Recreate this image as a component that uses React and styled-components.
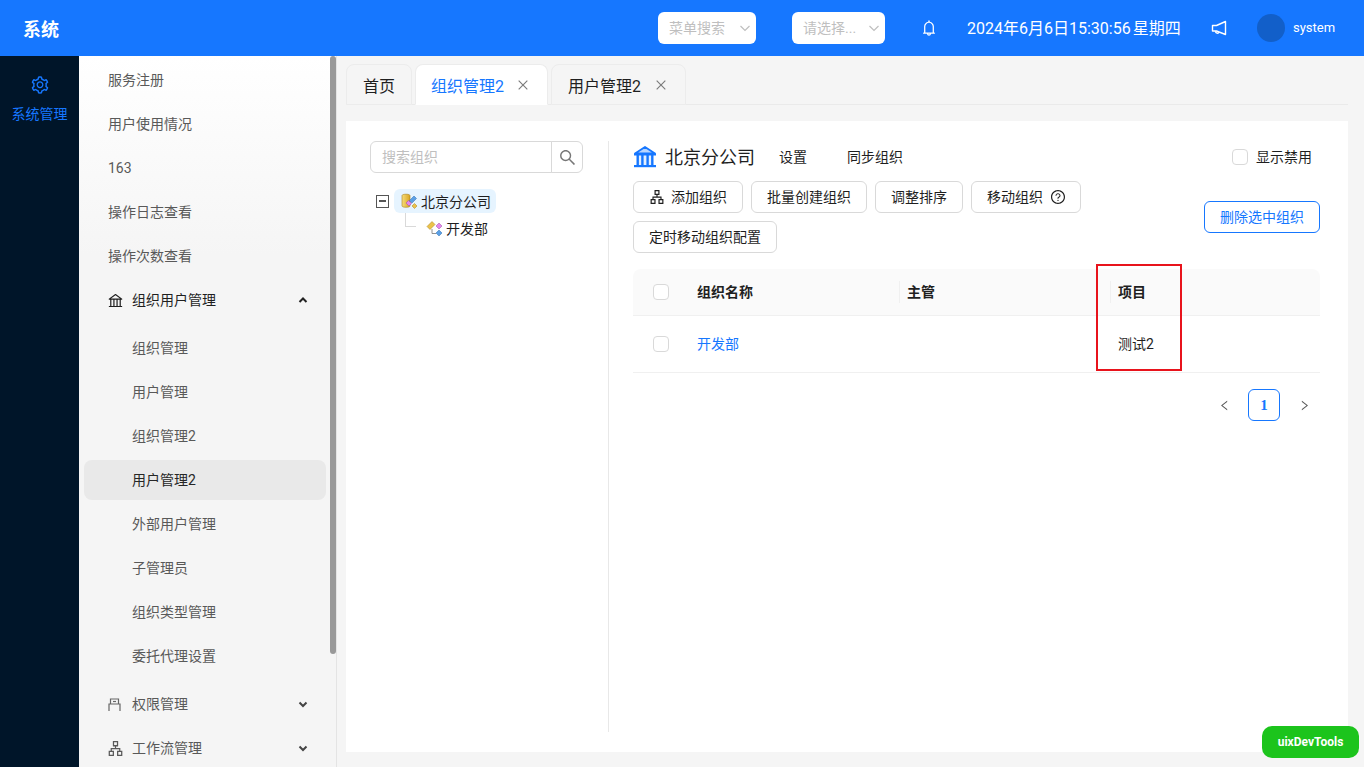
import React from 'react';
import styled, { createGlobalStyle } from 'styled-components';
import {
  AiOutlineSetting, AiOutlineBell, AiOutlineApartment, AiOutlineQuestionCircle,
  AiOutlineSearch, AiOutlineClose, AiOutlineLeft, AiOutlineRight, AiOutlineBank,
} from 'react-icons/ai';

const Global = createGlobalStyle`
  html, body { margin: 0; padding: 0; height: 100%; overflow: hidden; }
  * { box-sizing: border-box; }
  body { font-family: "Roboto", "Noto Sans CJK SC", sans-serif; font-size: 14px; color: #1f1f1f; background: #f5f5f5; }
`;

const Page = styled.div`display: flex; flex-direction: column; height: 767px; overflow: hidden;`;
const Label = styled.span`margin-bottom: 2px; white-space: nowrap;`;

const Header = styled.header`
  height: 56px; flex: none; background: #1677ff; color: #fff;
  display: flex; align-items: center; padding: 0 29px 0 24px;
  & > * { flex: none; }
`;
const Brand = styled.div`font-size: 18px; font-weight: 700; width: 634px; margin-left: -1px; margin-right: 1px;`;
const SelectBox = styled.div`
  width: ${p => p.$w}px; height: 32px; background: #fff; border-radius: 6px; margin-right: ${p => p.$mr}px;
  display: flex; align-items: center; justify-content: space-between; padding: 0 5px 0 11px;
  color: #bfbfbf; font-size: 14px; white-space: nowrap;
`;
const Chevron = styled.svg`width: 12px; height: 12px; flex: none; fill: none; stroke: ${p => p.$c || '#bfbfbf'}; stroke-width: ${p => p.$sw || 1.2};`;
const HeadIcon = styled.span`display: inline-flex; font-size: ${p => p.$s || 18}px; margin: 0 ${p => p.$mr}px 0 ${p => p.$ml}px;`;
const HornSvg = styled.svg`width: 16px; height: 16px; margin: 0 30px 0 30px; fill: none; stroke: #fff; stroke-width: 1.4;`;
const DateText = styled.span`font-size: 16px; white-space: nowrap; width: 214px; word-spacing: -2px; margin-bottom: 2px;`;
const Avatar = styled.span`width: 28px; height: 28px; border-radius: 50%; background: #125fc9; margin-right: 8px; flex: none;`;
const UserName = styled.span`font-size: 13px; margin-bottom: 2px;`;

const Body = styled.div`flex: 1; display: flex; min-height: 0;`;
const Rail = styled.nav`width: 79px; flex: none; background: #001529; color: #1677ff; display: flex; flex-direction: column; align-items: center; padding-top: 19px;`;
const RailIcon = styled.span`display: flex; font-size: 20px; margin-bottom: 9px;`;
const RailLabel = styled.span`font-size: 14px; line-height: 20px; white-space: nowrap;`;

const Side = styled.aside`
  position: relative; width: 258px; flex: none; overflow: hidden; border-right: 1px solid #e4e4e4;
  background: linear-gradient(180deg, #fff 0, #f5f5f5 200px);
  padding: 4px 10px 0 5px; display: flex; flex-direction: column; gap: 4px;
`;
const Scroll = styled.div`position: absolute; top: 0; right: 0; width: 6px; height: 598px; background: #999; border-radius: 3px;`;
const Item = styled.div`
  height: 40px; flex: none; display: flex; align-items: center; border-radius: 8px;
  padding-left: ${p => p.$sub ? 48 : 24}px; padding-right: 17px;
  color: ${p => p.$dark ? '#1f1f1f' : '#595959'};
  background: ${p => p.$sel ? '#e9e9e9' : 'transparent'};
  ${p => p.$sel && 'color:#262626;'}
`;
const ItemIcon = styled.span`display: inline-flex; font-size: 17px; width: 24px; margin-left: -1px; margin-right: 1px; flex: none;`;
const ItemLabel = styled.span`flex: 1; white-space: nowrap; margin-bottom: ${p => p.$flat ? 0 : 2}px;`;
const SubList = styled.div`display: flex; flex-direction: column; gap: 4px; padding: 4px 0; flex: none;`;

const Main = styled.main`flex: 1; min-width: 0; display: flex; flex-direction: column; padding: 8px 16px 15px 9px;`;
const TabBar = styled.div`display: flex; gap: 3px; height: 41px; flex: none; border-bottom: 1px solid #eaeaea; margin-bottom: 16px;`;
const Tab = styled.div`
  height: 41px; display: flex; align-items: center; font-size: 16px; padding: 0 ${p => p.$pr || 16}px 0 ${p => p.$pl || 16}px;
  border: 1px solid #ececec; border-radius: 8px 8px 0 0; white-space: nowrap;
  background: ${p => p.$on ? '#fff' : '#f5f5f5'}; color: ${p => p.$on ? '#1677ff' : '#1f1f1f'};
  ${p => p.$on && 'border-bottom-color:#fff;'}
`;
const TabClose = styled.span`display: inline-flex; color: #7a7a7a; font-size: 14px; margin-left: ${p => p.$ml}px;`;

const Card = styled.section`flex: 1; background: #fff; display: flex; padding: 20px 28px 20px 24px; min-height: 0;`;
const TreePanel = styled.div`width: 239px; flex: none; padding-right: 25px; border-right: 1px solid #e8e8e8;`;
const Search = styled.div`display: flex; height: 32px; margin-bottom: 16px;`;
const SearchInput = styled.div`flex: 1; border: 1px solid #d9d9d9; border-radius: 6px 0 0 6px; color: #bfbfbf; padding-left: 11px; display: flex; align-items: center;`;
const SearchBtn = styled.div`width: 32px; margin-left: -1px; border: 1px solid #d9d9d9; border-radius: 0 6px 6px 0; color: #777; font-size: 19px; display: flex; align-items: center; justify-content: center;`;
const TreeRow = styled.div`display: flex; align-items: center; height: 24px; margin-bottom: 3px; padding-left: ${p => p.$indent}px; position: relative;`;
const Expander = styled.span`width: 13px; height: 13px; border: 1.5px solid #555; margin-right: 5px; display: flex; align-items: center; justify-content: center; &::after { content: ''; width: 7px; height: 1.5px; background: #555; }`;
const NodePill = styled.span`height: 24px; display: inline-flex; align-items: center; gap: 3px; padding: 0 5px 0 7px; border-radius: 6px; background: ${p => p.$on ? '#e6f4ff' : 'transparent'}; white-space: nowrap;`;
const Connector = styled.span`position: absolute; left: 35px; top: -3px; width: 11px; height: 14px; border-left: 1px solid #d9d9d9; border-bottom: 1px solid #d9d9d9;`;
const NodeIcon = styled.svg`width: 17px; height: 17px; flex: none;`;

const Panel = styled.div`flex: 1; min-width: 0; margin-left: 24px; display: flex; flex-direction: column;`;
const TitleRow = styled.div`display: flex; align-items: center; height: 32px; margin-bottom: 8px;`;
const BankSvg = styled.svg`width: 24px; height: 24px; margin-right: 8px; flex: none;`;
const OrgName = styled.span`font-size: 18px; margin-right: 24px; margin-bottom: 2px; white-space: nowrap;`;
const TextLink = styled.span`margin-right: 40px; margin-bottom: 2px; white-space: nowrap;`;
const CheckWrap = styled.label`margin-left: auto; display: flex; align-items: center; gap: 8px; margin-right: 8px;`;
const Check = styled.span`width: 16px; height: 16px; border: 1px solid #d9d9d9; border-radius: 4px; background: #fff; flex: none; display: block;`;
const ActionRow = styled.div`display: flex; align-items: center; justify-content: space-between; margin-bottom: 16px;`;
const BtnWrap = styled.div`display: flex; flex-wrap: wrap; gap: 8px; width: 460px;`;
const Btn = styled.button`
  height: 32px; padding: 0 15px; border-radius: 6px; border: 1px solid ${p => p.$primary ? '#1677ff' : '#d9d9d9'};
  color: ${p => p.$primary ? '#1677ff' : '#1f1f1f'}; background: #fff; font: inherit; white-space: nowrap;
  display: inline-flex; align-items: center;
`;
const BtnIcon = styled.span`display: inline-flex; font-size: ${p => p.$s || 16}px; margin: 0 ${p => p.$mr || 0}px 0 ${p => p.$ml || 0}px;`;

const Table = styled.div`position: relative;`;
const Row = styled.div`
  display: grid; grid-template-columns: 56px 210px 211px 210px; align-items: center;
  height: ${p => p.$head ? 47 : 57}px; border-bottom: 1px solid #f0f0f0;
  ${p => p.$head && 'background:#fafafa;border-radius:8px 8px 0 0;font-weight:600;'}
`;
const Cell = styled.div`padding: 0 0 2px 8px; position: relative; ${p => p.$sep && `&::before{content:'';position:absolute;left:0;top:0;height:22px;width:1px;background:#f0f0f0;}`}`;
const CheckCell = styled.div`padding-left: 20px;`;
const Link = styled.span`color: #1677ff;`;
const Mark = styled.div`position: absolute; left: 463px; top: -5px; width: 86px; height: 107px; border: 2px solid #e8131c; pointer-events: none;`;
const Pager = styled.div`display: flex; justify-content: flex-end; align-items: center; margin-top: 16px;`;
const PageArrow = styled.span`width: 32px; height: 32px; display: flex; align-items: center; justify-content: center; font-size: 13px; color: #595959;`;
const PageNum = styled.span`width: 32px; height: 32px; border: 1px solid #1677ff; border-radius: 6px; color: #1677ff; font-weight: 700; font-family: "Liberation Serif", serif; font-size: 15px; display: flex; align-items: center; justify-content: center; margin: 0 8px;`;
const DevTools = styled.div`position: fixed; left: 1262px; top: 726px; width: 97px; height: 32px; background: #1cc41c; color: #fff; border-radius: 10px; font-weight: 700; font-size: 12px; display: flex; align-items: center; justify-content: center;`;

const Down = ({ c, sw }) => <Chevron $c={c} $sw={sw} viewBox="0 0 12 12"><path d="M1.5 4l4.5 4.500L10.500 4" /></Chevron>;
const Up = ({ c, sw }) => <Chevron $c={c} $sw={sw} viewBox="0 0 12 12"><path d="M2.500 8L6 4.500 9.500 8" /></Chevron>;
const MDown = () => <Chevron $c="#444" $sw={2} viewBox="0 0 12 12"><path d="M2.500 4.500L6 8l3.500-3.500" /></Chevron>;

const BankIcon = () => (
  <BankSvg viewBox="0 0 24 24">
    <path d="M12 2L2 8.500h20z" fill="#b9d6ff" stroke="#1677ff" strokeWidth="1.800" strokeLinejoin="round" />
    <rect x="4" y="10" width="16" height="10" fill="#e3efff" />
    <g fill="#1677ff">
      <rect x="1" y="8.500" width="22" height="2" />
      <rect x="3.500" y="10" width="2.400" height="10" /><rect x="8.200" y="10" width="2.400" height="10" />
      <rect x="13.400" y="10" width="2.400" height="10" /><rect x="18.100" y="10" width="2.400" height="10" />
      <rect x="1" y="20" width="22" height="2.200" />
    </g>
  </BankSvg>
);
const Horn = () => (
  <HornSvg viewBox="0 0 16 16">
    <path d="M14.500 1.500v13L5.500 11H1.500V5.500h4z" strokeLinejoin="round" />
    <path d="M4.500 11.200a2 2 0 0 0 3.700 1" />
  </HornSvg>
);
const PermIcon = () => (
  <svg width="15" height="15" viewBox="0 0 15 15" fill="none" stroke="#666" strokeWidth="1.200">
    <path d="M2 14V7h11v7M3.500 7V2h8v5" /><path d="M6 4.500h3" />
  </svg>
);
const RootIcon = () => (
  <NodeIcon viewBox="0 0 17 17">
    <defs>
      <linearGradient id="cyl" x1="0" x2="1" y1="0" y2="0">
        <stop offset="0" stopColor="#f7dc7a" /><stop offset="1" stopColor="#d9a521" />
      </linearGradient>
    </defs>
    <path d="M1 2.500C1 .8 9 .8 9 2.500V13c0 1.700-8 1.700-8 0z" fill="url(#cyl)" stroke="#a8811c" strokeWidth=".6" />
    <path d="M13 3l2.500 2.500-4.500 4.500L8.500 7.500z" fill="#5ba0e6" stroke="#2c6cb0" strokeWidth=".5" />
    <path d="M7.500 7.500L10.500 10.500 8 13 5 10z" fill="#e387ec" stroke="#9a4aa5" strokeWidth=".5" />
    <path d="M13.500 10.500L16 13l-2.500 2.500L11 13z" fill="#ecc24a" stroke="#a8811c" strokeWidth=".5" />
  </NodeIcon>
);
const ChildIcon = () => (
  <NodeIcon viewBox="0 0 17 17">
    <path d="M6 1.500L9 4.500 4 9.500 1 6.500z" fill="#ecc24a" stroke="#a8811c" strokeWidth=".5" />
    <path d="M13 3l3 3-3 3-3-3z" fill="#e387ec" stroke="#9a4aa5" strokeWidth=".5" />
    <path d="M13 10l3 3-3 3-3-3z" fill="#5ba0e6" stroke="#2c6cb0" strokeWidth=".5" />
    <path d="M6 9v4.500h4" fill="none" stroke="#777" strokeWidth=".8" />
  </NodeIcon>
);

const topBefore = ['服务注册', '用户使用情况', '163', '操作日志查看', '操作次数查看'];
const subs = ['组织管理', '用户管理', '组织管理2', '用户管理2', '外部用户管理', '子管理员', '组织类型管理', '委托代理设置'];

export default function App() {
  return (
    <Page>
      <Global />
      <Header>
        <Brand>系统</Brand>
        <SelectBox $w={98} $mr={36}><Label>菜单搜索</Label><Down /></SelectBox>
        <SelectBox $w={93} $mr={0}><Label>请选择...</Label><Down /></SelectBox>
        <HeadIcon $s={18} $ml={35} $mr={29}><AiOutlineBell /></HeadIcon>
        <DateText>2024年6月6日15:30:56 星期四</DateText>
        <Horn />
        <Avatar />
        <UserName>system</UserName>
      </Header>
      <Body>
        <Rail>
          <RailIcon><AiOutlineSetting /></RailIcon>
          <RailLabel>系统管理</RailLabel>
        </Rail>
        <Side>
          {topBefore.map(t => <Item key={t}><ItemLabel $flat={t === '163'}>{t}</ItemLabel></Item>)}
          <Item $dark><ItemIcon><AiOutlineBank /></ItemIcon><ItemLabel>组织用户管理</ItemLabel><Up c="#222" sw={2} /></Item>
          <SubList>
            {subs.map(t => <Item key={t} $sub $sel={t === '用户管理2'}><ItemLabel>{t}</ItemLabel></Item>)}
          </SubList>
          <Item><ItemIcon><PermIcon /></ItemIcon><ItemLabel>权限管理</ItemLabel><MDown /></Item>
          <Item><ItemIcon><AiOutlineApartment /></ItemIcon><ItemLabel>工作流管理</ItemLabel><MDown /></Item>
          <Scroll />
        </Side>
        <Main>
          <TabBar>
            <Tab>首页</Tab>
            <Tab $on $pl={15} $pr={17}>组织管理2<TabClose $ml={12}><AiOutlineClose /></TabClose></Tab>
            <Tab $pr={17}>用户管理2<TabClose $ml={13}><AiOutlineClose /></TabClose></Tab>
          </TabBar>
          <Card>
            <TreePanel>
              <Search>
                <SearchInput><Label>搜索组织</Label></SearchInput>
                <SearchBtn><AiOutlineSearch /></SearchBtn>
              </Search>
              <TreeRow $indent={6}>
                <Expander />
                <NodePill $on><RootIcon />北京分公司</NodePill>
              </TreeRow>
              <TreeRow $indent={49}>
                <Connector />
                <NodePill><ChildIcon />开发部</NodePill>
              </TreeRow>
            </TreePanel>
            <Panel>
              <TitleRow>
                <BankIcon />
                <OrgName>北京分公司</OrgName>
                <TextLink>设置</TextLink>
                <TextLink>同步组织</TextLink>
                <CheckWrap><Check /><Label>显示禁用</Label></CheckWrap>
              </TitleRow>
              <ActionRow>
                <BtnWrap>
                  <Btn><BtnIcon $mr={6}><AiOutlineApartment /></BtnIcon><Label>添加组织</Label></Btn>
                  <Btn><Label>批量创建组织</Label></Btn>
                  <Btn><Label>调整排序</Label></Btn>
                  <Btn><Label>移动组织</Label><BtnIcon $ml={7} $mr={-1}><AiOutlineQuestionCircle /></BtnIcon></Btn>
                  <Btn><Label>定时移动组织配置</Label></Btn>
                </BtnWrap>
                <Btn $primary><Label>删除选中组织</Label></Btn>
              </ActionRow>
              <Table>
                <Row $head>
                  <CheckCell><Check /></CheckCell>
                  <Cell>组织名称</Cell>
                  <Cell $sep>主管</Cell>
                  <Cell $sep>项目</Cell>
                </Row>
                <Row>
                  <CheckCell><Check /></CheckCell>
                  <Cell><Link>开发部</Link></Cell>
                  <Cell />
                  <Cell>测试2</Cell>
                </Row>
                <Mark />
              </Table>
              <Pager>
                <PageArrow><AiOutlineLeft /></PageArrow>
                <PageNum>1</PageNum>
                <PageArrow><AiOutlineRight /></PageArrow>
              </Pager>
            </Panel>
          </Card>
        </Main>
      </Body>
      <DevTools>uixDevTools</DevTools>
    </Page>
  );
}
